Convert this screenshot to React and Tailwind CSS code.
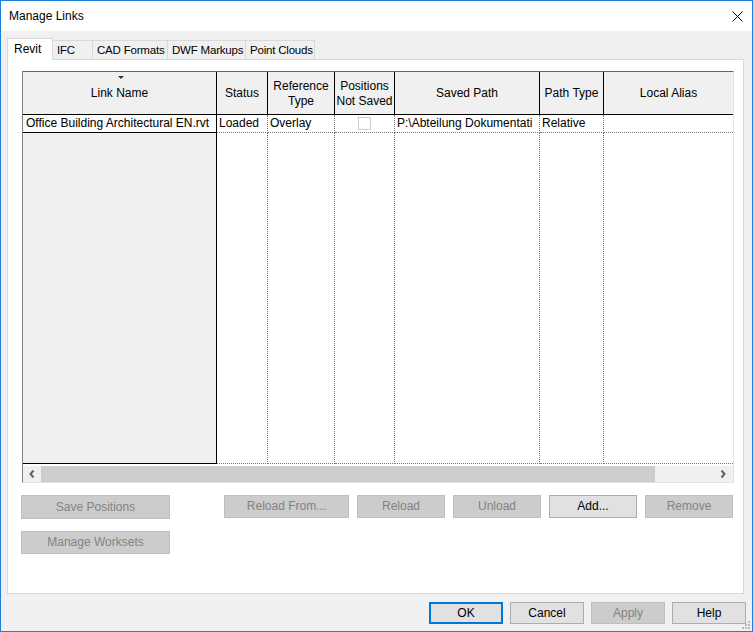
import React from 'react';

const COLS = [
  { key: 'name', label: ['Link Name'], w: 'w-[194px]' },
  { key: 'status', label: ['Status'], w: 'w-[51px]' },
  { key: 'ref', label: ['Reference', 'Type'], w: 'w-[67px]' },
  { key: 'pos', label: ['Positions', 'Not Saved'], w: 'w-[60px]' },
  { key: 'path', label: ['Saved Path'], w: 'w-[145px]' },
  { key: 'ptype', label: ['Path Type'], w: 'w-[64px]' },
  { key: 'alias', label: ['Local Alias'], w: 'w-[129px]' },
];

const TABS = [
  { label: 'IFC', w: 'w-[40px]' },
  { label: 'CAD Formats', w: 'w-[75px]' },
  { label: 'DWF Markups', w: 'w-[78px]' },
  { label: 'Point Clouds', w: 'w-[69px]' },
];

function Btn({ children, w, h = 'h-[23px]', disabled, primary }) {
  const cls = disabled
    ? 'bg-[#cccccc] border-[#bfbfbf] text-[#838383]'
    : primary
      ? 'bg-[#e1e1e1] border-2 border-[#0078d7] text-black'
      : 'bg-[#e1e1e1] border-[#adadad] text-black';
  return (
    <div className={`${w} ${h} border ${cls} flex items-center justify-center shrink-0 whitespace-nowrap`}>
      {children}
    </div>
  );
}

function Chevron({ dir }) {
  return (
    <svg width="6" height="8" viewBox="0 0 6 8">
      {dir === 'left'
        ? <path d="M4.5 0.5 L1.5 4 L4.5 7.5" fill="none" stroke="#606060" strokeWidth="2" />
        : <path d="M1.5 0.5 L4.5 4 L1.5 7.5" fill="none" stroke="#606060" strokeWidth="2" />}
    </svg>
  );
}

export default function App() {
  return (
    <div className="relative w-[753px] h-[632px] border border-[#1c80d6] bg-[#f0f0f0] flex flex-col text-[12px] leading-[15px] text-black font-['Liberation_Sans',Arial,sans-serif]">
      {/* Title bar */}
      <div className="h-[30px] bg-white flex items-center justify-between pl-[8px] pr-[9px] shrink-0">
        <span className="pt-[1px]">Manage Links</span>
        <svg width="11" height="11" viewBox="0 0 11 11" className="mt-[1px]">
          <path d="M0.5 0.5 L10.5 10.5 M10.5 0.5 L0.5 10.5" stroke="#000" strokeWidth="1" />
        </svg>
      </div>

      <div className="flex-1 flex flex-col pl-[6px] pt-[7px]">
        {/* Tabs */}
        <div className="h-[21px] flex items-end shrink-0">
          <div className="relative z-10 w-[46px] h-[22px] -mb-px bg-white border border-b-0 border-[#d9d9d9] flex items-center pl-[6px]">
            Revit
          </div>
          {TABS.map(t => (
            <div key={t.label} className={`${t.w} h-[19px] border-t border-r border-[#d9d9d9] bg-[#f0f0f0] flex items-center pl-[4px] pt-[1px] whitespace-nowrap text-[11.5px] tracking-[-0.2px]`}>
              {t.label}
            </div>
          ))}
        </div>

        {/* Panel */}
        <div className="w-[737px] h-[535px] bg-white border border-[#d9d9d9] flex flex-col shrink-0">
          {/* Grid */}
          <div className="ml-[14px] mt-[11px] w-[712px] border-t border-t-[#646464] border-l border-l-[#828282] border-r border-r-[#e3e3e3] border-b border-b-[#e3e3e3] flex flex-col">
            {/* Header */}
            <div className="flex h-[43px] bg-[#f0f0f0] border-b border-black">
              {COLS.map((c, i) => (
                <div key={c.key} className={`${c.w} relative flex flex-col items-center justify-center pt-[1px] shrink-0 ${i < COLS.length - 1 ? 'border-r border-black' : ''}`}>
                  {c.key === 'name' && (
                    <svg width="6" height="4" viewBox="0 0 6 4" className="absolute top-[4px] left-[95px]">
                      <path d="M0 0 H6 L3 3 Z" fill="#333" />
                    </svg>
                  )}
                  {c.label.map(l => <span key={l} className="leading-[15px]">{l}</span>)}
                </div>
              ))}
            </div>

            {/* Data row */}
            <div className="flex h-[18px]">
              <div className="w-[194px] bg-[#fafafa] border-r border-b border-black pl-[3px] flex items-center whitespace-nowrap overflow-hidden shrink-0">
                Office Building Architectural EN.rvt
              </div>
              <div className="w-[51px] border-r border-b border-dotted border-[#7a7a7a] pl-[2px] flex items-center shrink-0">Loaded</div>
              <div className="w-[67px] border-r border-b border-dotted border-[#7a7a7a] pl-[2px] flex items-center shrink-0">Overlay</div>
              <div className="w-[60px] border-r border-b border-dotted border-[#7a7a7a] flex items-center justify-center shrink-0">
                <div className="w-[13px] h-[13px] border border-[#cccccc] bg-white" />
              </div>
              <div className="w-[145px] border-r border-b border-dotted border-[#7a7a7a] pl-[2px] flex items-center whitespace-nowrap overflow-hidden shrink-0">P:\Abteilung Dokumentati</div>
              <div className="w-[64px] border-r border-b border-dotted border-[#7a7a7a] pl-[2px] flex items-center shrink-0">Relative</div>
              <div className="w-[129px] border-b border-dotted border-[#7a7a7a] shrink-0" />
            </div>

            {/* Empty body */}
            <div className="flex h-[331px]">
              <div className="w-[194px] bg-[#f0f0f0] border-r border-b border-black shrink-0" />
              <div className="w-[51px] border-r border-b border-dotted border-[#7a7a7a] shrink-0" />
              <div className="w-[67px] border-r border-b border-dotted border-[#7a7a7a] shrink-0" />
              <div className="w-[60px] border-r border-b border-dotted border-[#7a7a7a] shrink-0" />
              <div className="w-[145px] border-r border-b border-dotted border-[#7a7a7a] shrink-0" />
              <div className="w-[64px] border-r border-b border-dotted border-[#7a7a7a] shrink-0" />
              <div className="w-[129px] border-b border-dotted border-[#7a7a7a] shrink-0" />
            </div>

            {/* Horizontal scrollbar */}
            <div className="h-[18px] pt-[2px] bg-white">
              <div className="h-[16px] bg-[#f0f0f0] flex items-center">
                <div className="w-[18px] h-full flex items-center justify-center"><Chevron dir="left" /></div>
                <div className="w-[614px] h-full bg-[#cdcdcd]" />
                <div className="flex-1" />
                <div className="w-[18px] h-full flex items-center justify-center mr-[1px]"><Chevron dir="right" /></div>
              </div>
            </div>
          </div>

          {/* Link buttons */}
          <div className="flex mt-[12px] ml-[13px]">
            <div className="w-[149px] flex flex-col gap-[12px] shrink-0">
              <Btn w="w-[149px]" h="h-[24px]" disabled>Save Positions</Btn>
              <Btn w="w-[149px]" h="h-[23px]" disabled>Manage Worksets</Btn>
            </div>
            <div className="ml-[54px] flex gap-[8px] items-start">
              <Btn w="w-[125px]" disabled>Reload From...</Btn>
              <Btn w="w-[88px]" disabled>Reload</Btn>
              <Btn w="w-[88px]" disabled>Unload</Btn>
              <Btn w="w-[88px]">Add...</Btn>
              <Btn w="w-[88px]" disabled>Remove</Btn>
            </div>
          </div>
        </div>

        {/* Dialog buttons */}
        <div className="mt-[8px] flex justify-end gap-[7px] pr-[6px]">
          <Btn w="w-[74px]" h="h-[22px]" primary>OK</Btn>
          <Btn w="w-[74px]" h="h-[22px]">Cancel</Btn>
          <Btn w="w-[74px]" h="h-[22px]" disabled>Apply</Btn>
          <Btn w="w-[74px]" h="h-[22px]">Help</Btn>
        </div>
      </div>

      {/* Resize grip */}
      <svg width="10" height="10" viewBox="0 0 10 10" className="absolute right-[1px] bottom-[1px]">
        <rect x="7" y="1" width="2" height="2" fill="#b8b8b8" />
        <rect x="4" y="4" width="2" height="2" fill="#b8b8b8" />
        <rect x="7" y="4" width="2" height="2" fill="#b8b8b8" />
        <rect x="1" y="7" width="2" height="2" fill="#b8b8b8" />
        <rect x="4" y="7" width="2" height="2" fill="#b8b8b8" />
        <rect x="7" y="7" width="2" height="2" fill="#b8b8b8" />
      </svg>
    </div>
  );
}
